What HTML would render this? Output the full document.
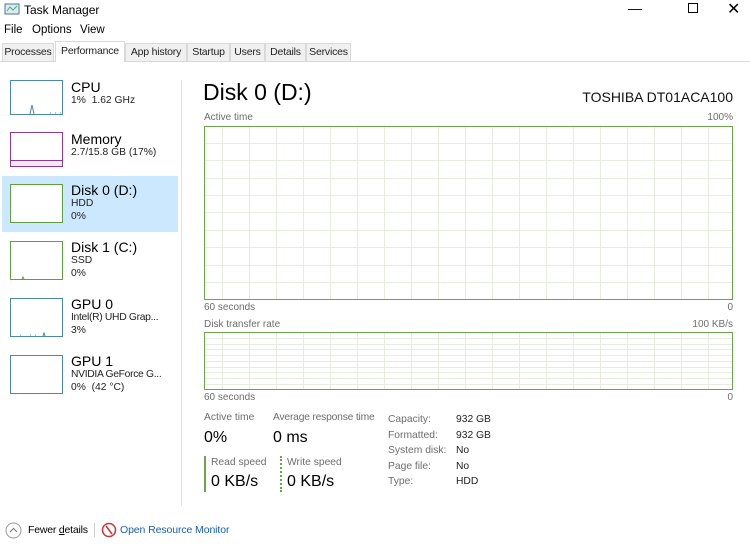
<!DOCTYPE html>
<html><head><style>
*{margin:0;padding:0;box-sizing:border-box}
body{width:750px;height:549px;background:#fff;font-family:"Liberation Sans",sans-serif;color:#000;position:relative;overflow:hidden}
.a{position:absolute;white-space:nowrap}
.s{font-size:11px}
.g{color:#6d6d6d}
.tab{position:absolute;top:43px;height:18px;border:1px solid #d9d9d9;border-bottom:none;background:#f0f0f0;font-size:10.5px;line-height:17px;text-align:center;color:#222;letter-spacing:-0.2px}
.th{position:absolute;left:10px;width:53px;background:#fff}
.t1{font-size:14px}
.t2{font-size:10.3px;color:#222}
</style></head><body>
<svg class="a" style="left:4px;top:2px" width="16" height="14"><rect x="1" y="2" width="14" height="10" fill="#dfe9ee" stroke="#4a7a90"/><path d="M3 9 L6 5 L9 8 L13 4" stroke="#3b8" fill="none"/></svg>
<div class="a" style="left:24px;top:3px;font-size:12px">Task Manager</div>
<div class="a" style="left:628px;top:0px;font-size:14px">&#8212;</div>
<div class="a" style="left:688px;top:3px;width:10px;height:10px;border:1px solid #000"></div>
<div class="a" style="left:727px;top:-1px;font-size:16px">&#10005;</div>
<div class="a" style="left:4px;top:24px;font-size:11.5px">File</div>
<div class="a" style="left:32px;top:24px;font-size:11.5px">Options</div>
<div class="a" style="left:80px;top:24px;font-size:11.5px">View</div>
<div class="a" style="left:0;top:61px;width:750px;height:1px;background:#d9d9d9"></div>
<div class="tab" style="left:2px;width:52px">Processes</div>
<div class="tab" style="left:55px;width:70px;top:41px;height:21px;background:#fff;line-height:18px">Performance</div>
<div class="tab" style="left:125px;width:62px">App history</div>
<div class="tab" style="left:187px;width:43px">Startup</div>
<div class="tab" style="left:230px;width:35px">Users</div>
<div class="tab" style="left:265px;width:41px">Details</div>
<div class="tab" style="left:306px;width:45px">Services</div>

<div class="a" style="left:2px;top:176px;width:176px;height:56px;background:#cce8ff"></div>
<div class="a" style="left:181px;top:80px;width:1px;height:426px;background:#e3e3e3"></div>

<svg class="th" style="top:80px" width="53" height="35"><rect x=".5" y=".5" width="52" height="34" fill="#fff" stroke="#4a8aa8"/><path d="M20 34 L22 25 L24 34 M40 33 h1 M45 33 h1 M50 33h1" stroke="#4a8aa8" fill="none"/></svg>
<div class="a t1" style="left:71px;top:79px">CPU</div><div class="a t2" style="left:71px;top:95px">1%&nbsp; 1.62 GHz</div>
<svg class="th" style="top:132px" width="53" height="35"><rect x=".5" y=".5" width="52" height="34" fill="#fff" stroke="#8b3a8f"/><rect x=".5" y="28.5" width="52" height="6" fill="#f1e8f2" stroke="#8b3a8f"/></svg>
<div class="a t1" style="left:71px;top:131px">Memory</div><div class="a t2" style="left:71px;top:147px">2.7/15.8 GB (17%)</div>
<svg class="th" style="top:184px" width="53" height="39"><rect x=".5" y=".5" width="52" height="38" fill="#fff" stroke="#60a040"/></svg>
<div class="a t1" style="left:71px;top:182px">Disk 0 (D:)</div><div class="a t2" style="left:71px;top:198px">HDD</div><div class="a t2" style="left:71px;top:211px">0%</div>
<svg class="th" style="top:241px" width="53" height="39"><rect x=".5" y=".5" width="52" height="38" fill="#fff" stroke="#60a040"/><path d="M12 38 L13 36 L14 38" stroke="#60a040" fill="none"/></svg>
<div class="a t1" style="left:71px;top:239px">Disk 1 (C:)</div><div class="a t2" style="left:71px;top:255px">SSD</div><div class="a t2" style="left:71px;top:268px">0%</div>
<svg class="th" style="top:298px" width="53" height="39"><rect x=".5" y=".5" width="52" height="38" fill="#fff" stroke="#4a8aa8"/><path d="M33 38 L34 35 L35 38 M10 37h1 M20 37h1 M25 37h1" stroke="#4a8aa8" fill="none"/></svg>
<div class="a t1" style="left:71px;top:296px">GPU 0</div><div class="a t2" style="left:71px;top:312px;letter-spacing:-0.3px">Intel(R) UHD Grap...</div><div class="a t2" style="left:71px;top:325px">3%</div>
<svg class="th" style="top:355px" width="53" height="39"><rect x=".5" y=".5" width="52" height="38" fill="#fff" stroke="#4a8aa8"/></svg>
<div class="a t1" style="left:71px;top:353px">GPU 1</div><div class="a t2" style="left:71px;top:369px;letter-spacing:-0.3px">NVIDIA GeForce G...</div><div class="a t2" style="left:71px;top:382px">0%&nbsp; (42 °C)</div>

<div class="a" style="left:203px;top:79px;font-size:23px">Disk 0 (D:)</div>
<div class="a" style="right:17px;top:89px;font-size:14px;color:#111">TOSHIBA DT01ACA100</div>
<div class="a s g" style="left:204px;top:112px;font-size:10px">Active time</div>
<div class="a s g" style="right:17px;top:112px;font-size:10px">100%</div>
<svg class="a" style="left:204px;top:126px" width="529" height="174">
<g stroke="#e6ede0" stroke-width="1">
<path d="M18.5 0V174M45.5 0V174M72.5 0V174M99.5 0V174M126.5 0V174M153.5 0V174M180.5 0V174M207.5 0V174M234.5 0V174M261.5 0V174M288.5 0V174M315.5 0V174M342.5 0V174M369.5 0V174M396.5 0V174M423.5 0V174M450.5 0V174M477.5 0V174M504.5 0V174"/>
<path d="M0 17.5H529M0 34.5H529M0 52.5H529M0 69.5H529M0 86.5H529M0 104.5H529M0 121.5H529M0 139.5H529M0 156.5H529"/>
</g><rect x=".5" y=".5" width="528" height="173" fill="none" stroke="#6da34d"/></svg>
<div class="a g" style="left:204px;top:302px;font-size:10px">60 seconds</div>
<div class="a g" style="right:17px;top:302px;font-size:10px">0</div>
<div class="a g" style="left:204px;top:319px;font-size:10px">Disk transfer rate</div>
<div class="a g" style="right:17px;top:319px;font-size:10px">100 KB/s</div>
<svg class="a" style="left:204px;top:332px" width="529" height="58">
<g stroke="#e6ede0" stroke-width="1">
<path d="M18.5 0V58M45.5 0V58M72.5 0V58M99.5 0V58M126.5 0V58M153.5 0V58M180.5 0V58M207.5 0V58M234.5 0V58M261.5 0V58M288.5 0V58M315.5 0V58M342.5 0V58M369.5 0V58M396.5 0V58M423.5 0V58M450.5 0V58M477.5 0V58M504.5 0V58"/>
<path d="M0 6.5H529M0 12.5H529M0 17.5H529M0 23.5H529M0 29.5H529M0 35.5H529M0 40.5H529M0 46.5H529M0 52.5H529"/>
</g><rect x=".5" y=".5" width="528" height="57" fill="none" stroke="#6da34d"/></svg>
<div class="a g" style="left:204px;top:392px;font-size:10px">60 seconds</div>
<div class="a g" style="right:17px;top:392px;font-size:10px">0</div>

<div class="a g" style="left:204px;top:412px;font-size:10.3px">Active time</div>
<div class="a" style="left:204px;top:429px;font-size:16px">0%</div>
<div class="a g" style="left:273px;top:412px;font-size:10.3px;letter-spacing:-0.2px">Average response time</div>
<div class="a" style="left:273px;top:429px;font-size:16px">0 ms</div>
<div class="a" style="left:204px;top:456px;width:2px;height:36px;background:#6da34d"></div>
<div class="a g" style="left:211px;top:457px;font-size:10.3px">Read speed</div>
<div class="a" style="left:211px;top:473px;font-size:16px">0 KB/s</div>
<div class="a" style="left:280px;top:456px;width:0;height:36px;border-left:2px dotted #6da34d"></div>
<div class="a g" style="left:287px;top:457px;font-size:10.3px">Write speed</div>
<div class="a" style="left:287px;top:473px;font-size:16px">0 KB/s</div>
<div class="a g" style="left:388px;top:412px;font-size:10.3px;line-height:15.6px">Capacity:<br>Formatted:<br>System disk:<br>Page file:<br>Type:</div>
<div class="a" style="left:456px;top:412px;font-size:10.3px;line-height:15.6px;color:#222">932 GB<br>932 GB<br>No<br>No<br>HDD</div>

<svg class="a" style="left:5px;top:522px" width="17" height="17"><circle cx="8.5" cy="8.5" r="7.5" fill="#fff" stroke="#999"/><path d="M5 10 L8.5 6.5 L12 10" stroke="#777" fill="none"/></svg>
<div class="a" style="left:28px;top:524px;font-size:10.5px;letter-spacing:-0.2px">Fewer <u>d</u>etails</div>
<div class="a" style="left:94px;top:523px;width:1px;height:14px;background:#ccc"></div>
<svg class="a" style="left:101px;top:522px" width="16" height="16"><circle cx="8" cy="8" r="6.5" fill="#fff" stroke="#c33" stroke-width="1.5"/><path d="M5 4 L11 12" stroke="#c33" stroke-width="1.5"/></svg>
<div class="a" style="left:120px;top:524px;font-size:10.5px;color:#1a5fa8;letter-spacing:-0.1px">Open Resource Monitor</div>
</body></html>
